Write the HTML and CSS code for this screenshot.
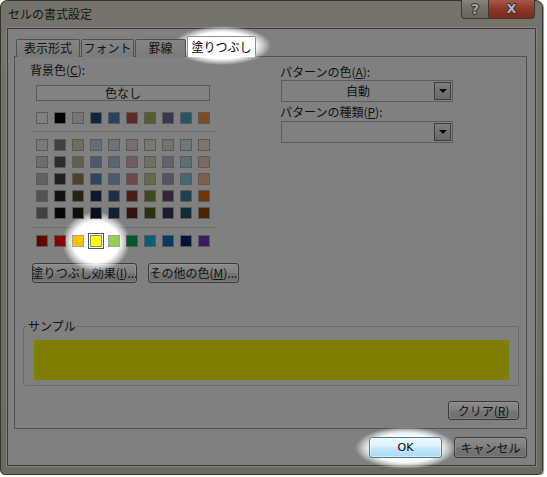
FILE: index.html
```html
<!DOCTYPE html>
<html lang="ja">
<head>
<meta charset="utf-8">
<title>セルの書式設定</title>
<link rel="stylesheet" href="styles.css">
</head>
<body>
<div class="window">
  <div class="titlebar">
    <div class="title">セルの書式設定</div>
    <div class="caption-btns">
      <div class="cap help">?</div>
      <div class="cap close">X</div>
    </div>
  </div>
  <div class="client">
    <div class="tabs">
      <div class="spot spot-tab"></div>
      <div class="tab t1">表示形式</div>
      <div class="tab t2">フォント</div>
      <div class="tab t3">罫線</div>
      <div class="tab active">塗りつぶし</div>
    </div>
    <div class="panel">
      <div class="cols">
        <div class="left">
          <div class="label">背景色(<u>C</u>):</div>
          <div class="nocolor">色なし</div>
          <div class="palette">
            <div class="spot spot-swatch"></div>
            <div class="row">
              <span class="sw" style="background:#808080"></span><span class="sw" style="background:#000000"></span><span class="sw" style="background:#777670"></span><span class="sw" style="background:#10253f"></span><span class="sw" style="background:#28415f"></span><span class="sw" style="background:#602826"></span><span class="sw" style="background:#4e5e2c"></span><span class="sw" style="background:#403251"></span><span class="sw" style="background:#265663"></span><span class="sw" style="background:#7c4b23"></span>
            </div>
            <div class="sep"></div>
            <div class="rows">
              <div class="row">
                <span class="sw" style="background:#797979"></span><span class="sw" style="background:#404040"></span><span class="sw" style="background:#6f6d62"></span><span class="sw" style="background:#636d78"></span><span class="sw" style="background:#6e7379"></span><span class="sw" style="background:#796e6e"></span><span class="sw" style="background:#76796f"></span><span class="sw" style="background:#737076"></span><span class="sw" style="background:#6e777a"></span><span class="sw" style="background:#7f756d"></span>
              </div>
              <div class="row">
                <span class="sw" style="background:#6d6d6d"></span><span class="sw" style="background:#2d2d2d"></span><span class="sw" style="background:#625f4c"></span><span class="sw" style="background:#475a71"></span><span class="sw" style="background:#5c6672"></span><span class="sw" style="background:#735d5c"></span><span class="sw" style="background:#6c725e"></span><span class="sw" style="background:#66616d"></span><span class="sw" style="background:#5c6f74"></span><span class="sw" style="background:#7e6b5b"></span>
              </div>
              <div class="row">
                <span class="sw" style="background:#606060"></span><span class="sw" style="background:#202020"></span><span class="sw" style="background:#4a452a"></span><span class="sw" style="background:#2a476a"></span><span class="sw" style="background:#4b5a6c"></span><span class="sw" style="background:#6d4b4a"></span><span class="sw" style="background:#626b4e"></span><span class="sw" style="background:#595164"></span><span class="sw" style="background:#49676e"></span><span class="sw" style="background:#7d6048"></span>
              </div>
              <div class="row">
                <span class="sw" style="background:#535353"></span><span class="sw" style="background:#131313"></span><span class="sw" style="background:#252315"></span><span class="sw" style="background:#0c1b2f"></span><span class="sw" style="background:#1b3049"></span><span class="sw" style="background:#4b1c1a"></span><span class="sw" style="background:#3b491e"></span><span class="sw" style="background:#30253d"></span><span class="sw" style="background:#19434e"></span><span class="sw" style="background:#723605"></span>
              </div>
              <div class="row">
                <span class="sw" style="background:#404040"></span><span class="sw" style="background:#070707"></span><span class="sw" style="background:#0f0e09"></span><span class="sw" style="background:#08121f"></span><span class="sw" style="background:#122031"></span><span class="sw" style="background:#321212"></span><span class="sw" style="background:#283114"></span><span class="sw" style="background:#201929"></span><span class="sw" style="background:#102c34"></span><span class="sw" style="background:#4c2403"></span>
              </div>
            </div>
            <div class="sep sep2"></div>
            <div class="row">
              <span class="sw" style="background:#640000"></span><span class="sw" style="background:#880000"></span><span class="sw lit" style="background:#ffc000"></span><span class="sw lit sel" style="background:#ffff00"></span><span class="sw lit" style="background:#92d050"></span><span class="sw" style="background:#005a2c"></span><span class="sw" style="background:#00607e"></span><span class="sw" style="background:#003a68"></span><span class="sw" style="background:#001238"></span><span class="sw" style="background:#3a1a62"></span>
            </div>
          </div>
          <div class="btnrow">
            <div class="btn fx">塗りつぶし効果(<u>I</u>)...</div>
            <div class="btn more">その他の色(<u>M</u>)...</div>
          </div>
        </div>
        <div class="right">
          <div class="label">パターンの色(<u>A</u>):</div>
          <div class="select"><span class="val">自動</span><span class="drop"></span></div>
          <div class="label label2">パターンの種類(<u>P</u>):</div>
          <div class="select select2"><span class="val"></span><span class="drop"></span></div>
        </div>
      </div>
      <fieldset class="sample">
        <legend>サンプル</legend>
        <div class="sample-fill"></div>
      </fieldset>
      <div class="clear-row"><div class="btn clear">クリア(<u>R</u>)</div></div>
    </div>
    <div class="footer">
      <div class="ok-wrap"><div class="spot spot-ok"></div><div class="btn ok">OK</div></div>
      <div class="btn cancel">キャンセル</div>
    </div>
  </div>
</div>
</body>
</html>
```
FILE: styles.css
```css
* { box-sizing: border-box; }
html, body { margin: 0; background: #fff; }
body {
  font-family: "Noto Sans CJK JP", "Noto Sans", sans-serif;
  font-size: 12px;
  line-height: 14px;
  color: #111;
}
u { text-decoration: underline; text-underline-offset: 1px; }

.window {
  width: 543px;
  height: 475px;
  border: 1px solid #34332e;
  border-radius: 7px 7px 5px 5px;
  background: linear-gradient(#75736b, #6c6a61);
  padding: 0 6px 8px 6px;
  display: flex;
  flex-direction: column;
  box-shadow: 1px 1px 1px rgba(0,0,0,.45);
}
.titlebar {
  flex: none;
  height: 27px;
  display: flex;
  justify-content: space-between;
  align-items: flex-start;
}
.title { padding: 6px 0 0 1px; color: #151515; }
.caption-btns { display: flex; margin-top: -1px; margin-right: 1px; }
.cap {
  height: 19px;
  display: flex;
  align-items: center;
  justify-content: center;
  font-family: "DejaVu Sans", sans-serif;
  font-weight: bold;
  border: 1px solid #3a3934;
  border-top: none;
  text-shadow: 1px 0 0 #2a2a2a, -1px 0 0 #2a2a2a, 0 1px 0 #2a2a2a, 0 -1px 0 #2a2a2a;
}
.help {
  width: 27px;
  border-right: none;
  border-radius: 0 0 0 4px;
  background: linear-gradient(#86847c, #716f68 50%, #67655e);
  color: #a8a8a8;
  font-size: 14px;
}
.close {
  width: 47px;
  border-radius: 0 0 4px 0;
  background: linear-gradient(#a35a4b, #8e3727 50%, #7b2b1d);
  color: #b5b5b5;
  font-size: 13px;
}

.client {
  flex: 1;
  border: 1px solid #3c3b38;
  box-shadow: 0 0 0 1px #84827a;
  background: #808080;
  padding: 7px 8px 0 6px;
  display: flex;
  flex-direction: column;
}

.tabs {
  position: relative;
  z-index: 1;
  display: flex;
  align-items: flex-end;
  height: 21px;
  margin-bottom: -1px;
  padding-left: 2px;
}
.tab {
  position: relative;
  z-index: 1;
  height: 18px;
  border: 1px solid #505050;
  border-bottom: none;
  border-radius: 2px 2px 0 0;
  background: linear-gradient(#858585, #7a7a7a);
  text-align: center;
  line-height: 16px;
  margin-right: 1px;
}
.t1 { width: 64px; }
.t2 { width: 53px; }
.t3 { width: 51px; }
.tab.active {
  width: 69px;
  height: 21px;
  background: #fff;
  border-color: #8f9090;
  color: #000;
  line-height: 20px;
}

.spot {
  position: absolute;
  z-index: 0;
  background: radial-gradient(closest-side, #fff 68%, rgba(255,255,255,.55) 84%, rgba(255,255,255,0) 100%);
}
.spot-tab { left: 159px; top: -10px; width: 98px; height: 39px; }
.spot-swatch { left: 26px; top: 100px; width: 68px; height: 60px; }
.spot-ok { left: -14px; top: -10px; width: 101px; height: 42px; }

.panel {
  border: 1px solid #525252;
  background: #808080;
  padding: 0 0 8px 0;
  display: flex;
  flex-direction: column;
}
.cols { display: flex; }
.left { width: 250px; padding: 6px 0 0 15px; }
.right { padding: 8px 0 0 15px; }

.nocolor {
  margin: 8px 0 0 6px;
  width: 174px;
  height: 16px;
  border: 1px solid #595959;
  background: #828282;
  text-align: center;
  line-height: 14px;
}

.palette { position: relative; margin: 11px 0 0 6px; }
.row { position: relative; z-index: 1; display: flex; gap: 6px; }
.rows { display: flex; flex-direction: column; gap: 5px; }
.sw {
  width: 12px;
  height: 12px;
  border: 1px solid #5a5a5a;
}
.sw.lit { border-color: #a3a3a3; }
.sw.sel { box-shadow: 0 0 0 1px #fff, 0 0 0 2px #555; border-color: #8a8a8a; }
.sep {
  width: 184px;
  height: 1px;
  margin: 7px 0 7px -5px;
  background: #6b6b6b;
}
.sep2 { margin-top: 8px; }

.btnrow { display: flex; gap: 11px; margin: 16px 0 0 2px; }
.btn {
  display: flex;
  align-items: center;
  justify-content: center;
  height: 20px;
  border: 1px solid #3a3a3a;
  border-radius: 3px;
  background: linear-gradient(#8b8b8b, #808080 48%, #757575 52%, #6f6f6f);
  box-shadow: inset 0 0 0 1px rgba(160,160,160,.35);
  white-space: nowrap;
}
.fx { width: 105px; }
.more { width: 91px; }

.select {
  display: flex;
  align-items: center;
  width: 172px;
  height: 22px;
  margin: 1px 0 0 1px;
  border: 1px solid #5c5c5c;
  background: #808080;
}
.val { flex: 1; text-align: center; }
.drop {
  width: 17px;
  height: 18px;
  margin-right: 1px;
  border: 1px solid #3d3d3d;
  background: linear-gradient(#7d7d7d, #696969);
  display: flex;
  align-items: center;
  justify-content: center;
}
.drop::after {
  content: "";
  border-left: 4px solid transparent;
  border-right: 4px solid transparent;
  border-top: 4px solid #000;
}
.label2 { margin-top: 3px; }
.select2 { margin-top: 2px; }

.sample {
  margin: 36px 7px 0 8px;
  padding: 7px 9px 5px 10px;
  border: 1px solid #6b6b6b;
  border-radius: 3px;
  min-width: 0;
}
.sample legend { padding: 0 1px; margin-left: -7px; line-height: 14px; }
.sample-fill { height: 40px; background: #808000; }

.clear-row { display: flex; justify-content: flex-end; margin: 15px 7px 0 0; }
.clear { width: 71px; height: 19px; }

.footer { display: flex; justify-content: flex-end; gap: 12px; margin-top: 8px; }
.ok-wrap { position: relative; }
.btn.ok, .btn.cancel { width: 73px; height: 21px; }
.btn.ok {
  position: relative;
  z-index: 1;
  background: linear-gradient(#eef8fd, #dcf1fc 45%, #c4e7fa 52%, #a9daf5);
  border-color: #3c7fb1;
  box-shadow: inset 0 0 0 1px rgba(255,255,255,.5);
  color: #000;
  font-family: "DejaVu Sans", sans-serif;
  font-size: 11px;
}
```
